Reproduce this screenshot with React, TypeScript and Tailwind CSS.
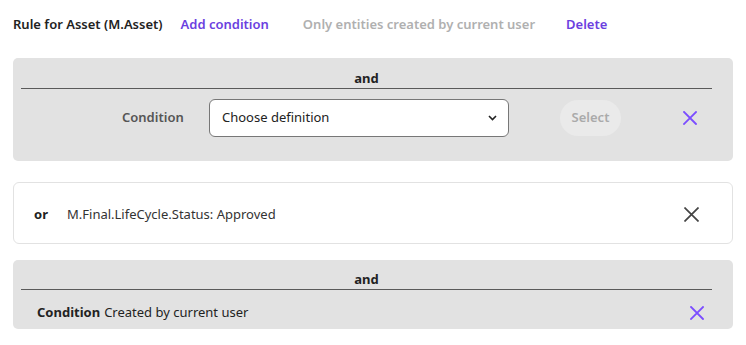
import React from 'react';

const font = { fontFamily: '"Noto Sans", "Open Sans", sans-serif' };

const Cross: React.FC<{ className?: string; size?: number; stroke?: number }> = ({ className, size = 14, stroke = 1.8 }) => (
  <svg width={size} height={size} viewBox="0 0 14 14" className={className} fill="none" stroke="currentColor" strokeWidth={stroke} strokeLinecap="square">
    <path d="M1 1 L13 13 M13 1 L1 13" />
  </svg>
);

const Chevron: React.FC = () => (
  <svg width="9" height="6" viewBox="0 0 9 6" fill="none" stroke="#222" strokeWidth={1.6}>
    <path d="M1 1 L4.5 4.5 L8 1" />
  </svg>
);

const Divider: React.FC = () => (
  <div className="ml-2 mr-[21px] border-b border-[#5a5a5a] text-center text-[13px] font-bold text-[#222] leading-[18px] pb-[1px]">
    and
  </div>
);

export default function App() {
  return (
    <div className="w-[746px] h-[345px] bg-white px-[13px]" style={font}>
      <div className="flex items-center h-[47px] text-[13px] font-semibold pt-[3px]">
        <span className="text-[#222]">Rule for Asset (M.Asset)</span>
        <button className="ml-[18px] text-[#6b3fe0]">Add condition</button>
        <button className="ml-[34px] text-[#b0b0b0]">Only entities created by current user</button>
        <button className="ml-[31px] text-[#6b3fe0]">Delete</button>
      </div>

      <div className="mt-[11px] h-[103px] rounded-[5px] bg-[#e2e2e2] pt-[11px]">
        <Divider />
        <div className="flex items-center mt-[10px]">
          <span className="ml-[109px] w-[87px] text-[13px] font-semibold text-[#555]">Condition</span>
          <div className="flex items-center justify-between w-[300px] h-[38px] rounded-[6px] border border-[#777] bg-white pl-3 pr-[11px] text-[13px] text-[#222]">
            <span>Choose definition</span>
            <Chevron />
          </div>
          <button className="ml-[51px] h-[36px] w-[61px] rounded-full bg-[#eaeaea] text-[13px] font-semibold text-[#aaa]">
            Select
          </button>
          <Cross className="ml-[62px] text-[#7b4dff]" />
        </div>
      </div>

      <div className="mt-[21px] h-[62px] flex items-center rounded-[6px] border border-[#e2e2e2] bg-white pt-[3px]">
        <span className="ml-5 w-[33px] text-[13px] font-bold text-[#222]">or</span>
        <span className="text-[13px] text-[#333]">M.Final.LifeCycle.Status: Approved</span>
        <Cross className="ml-auto mr-[33px] text-[#444]" size={15} stroke={1.6} />
      </div>

      <div className="mt-[16px] h-[69px] rounded-[5px] bg-[#e2e2e2] pt-[10px]">
        <Divider />
        <div className="flex items-center mt-[13px] pl-6 text-[13px] text-[#222]">
          <span className="font-bold">Condition</span>
          <span className="ml-1">Created by current user</span>
          <Cross className="ml-auto mr-[29px] text-[#7b4dff]" />
        </div>
      </div>
    </div>
  );
}
